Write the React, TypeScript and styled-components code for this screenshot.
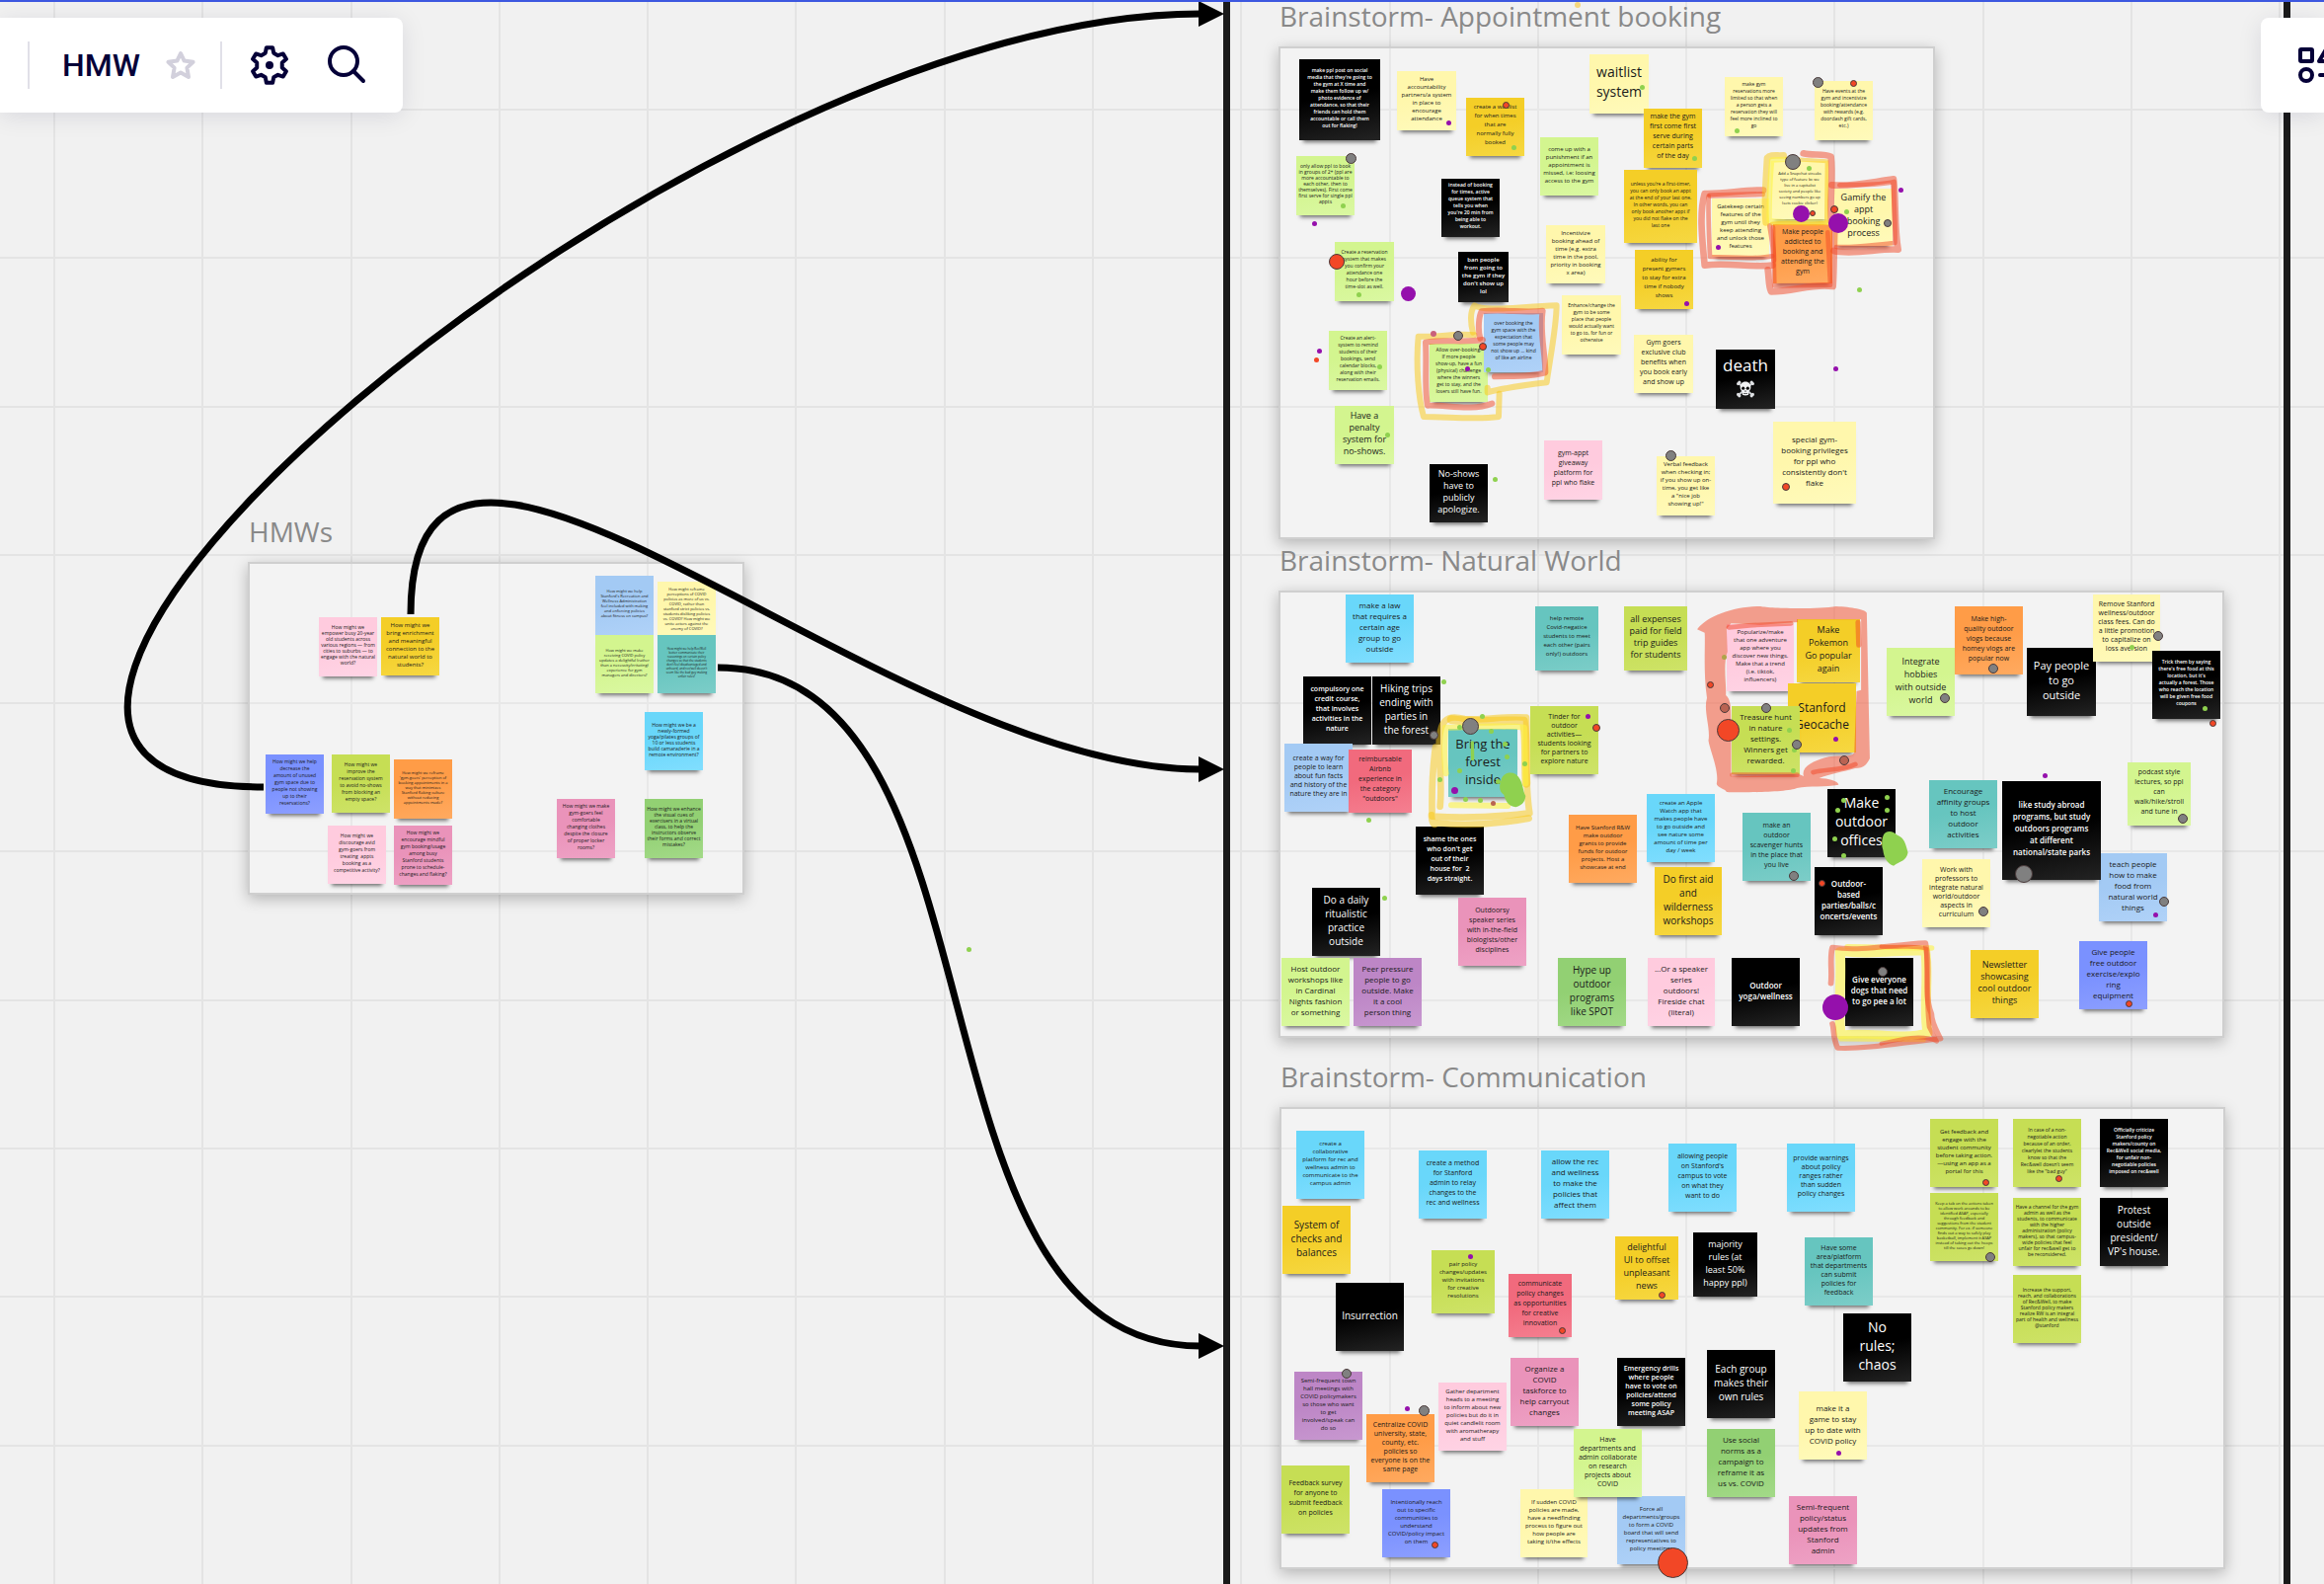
import React from "react";
import styled, { createGlobalStyle, css } from "styled-components";

const GlobalStyle = createGlobalStyle`
  * { box-sizing: border-box; }
  html, body { margin: 0; padding: 0; }
  body {
    background: #f1f1f1;
    color: #1a1a1a;
    font-family: "Open Sans", "Noto Sans", sans-serif;
  }
`;

/* ---------- palette ---------- */

const paper = {
  black: ["#000000", "#232323"],
  sand: ["#fff7ac", "#fffabb"],
  yellow: ["#f4ce27", "#f6d842"],
  lime: ["#d3f58f", "#daf8a2"],
  olive: ["#c6de54", "#cee368"],
  teal: ["#66c5bf", "#7ccdc8"],
  cyan: ["#69d7fa", "#81deff"],
  sky: ["#a3caf4", "#b0d2f8"],
  indigo: ["#7a91ff", "#8d9fff"],
  orange: ["#ff9c47", "#ffaa60"],
  pink: ["#ffcbde", "#ffd4e5"],
  rose: ["#ea93ba", "#eea2c5"],
  red: ["#f16a7d", "#f57f90"],
  purple: ["#bd86c6", "#c898d0"],
  green: ["#92d073", "#a3da88"],
} as const;

type Paper = keyof typeof paper;

const ink = {
  red: "#f24726",
  gray: "#808080",
  purple: "#9510ac",
  green: "#8fd14f",
  brown: "#b96352",
  olive: "#aea44a",
  mauve: "#c9607c",
  amber: "#f6d77c",
} as const;

type Ink = keyof typeof ink;

/* ---------- canvas parts ---------- */

const Canvas = styled.main`
  position: relative;
  min-height: 100vh;
  overflow: hidden;
  border-top: 2px solid #3d58e0;
`;

const Surface = styled.div`
  position: absolute;
  inset: -2px 0 0;
`;

const Drawing = styled.svg`
  position: absolute;
  inset: 0;
  width: 100%;
  height: 100%;
  pointer-events: none;
`;

const Board = styled.section<{ $x: number; $y: number; $w: number; $h: number }>`
  position: absolute;
  left: ${(p) => p.$x}px;
  top: ${(p) => p.$y}px;
  width: ${(p) => p.$w}px;
  height: ${(p) => p.$h}px;
  background: rgba(255, 255, 255, 0.15);
  box-shadow: 0 0 0 2px #cfcfcf, 0 4px 14px 2px rgba(0, 0, 0, 0.26);
`;

const BoardTitle = styled.h2`
  position: absolute;
  left: -1px;
  bottom: 100%;
  margin: 0 0 19px;
  color: #898989;
  font-size: 28px;
  font-weight: 400;
  line-height: 28px;
  white-space: nowrap;
`;

const Sticky = styled.article<{
  $x: number;
  $y: number;
  $w: number;
  $h: number;
  $paper: Paper;
}>`
  position: absolute;
  left: ${(p) => p.$x}px;
  top: ${(p) => p.$y}px;
  width: ${(p) => p.$w}px;
  height: ${(p) => p.$h}px;
  display: flex;
  flex-direction: column;
  align-items: center;
  justify-content: center;
  padding-bottom: 4px;
  color: ${(p) => (p.$paper === "black" ? "#ffffff" : "#1a1a1a")};
  background: linear-gradient(170deg, ${(p) => paper[p.$paper][0]} 45%, ${(p) => paper[p.$paper][1]});
  box-shadow: 0 6px 4px -4px rgba(0, 0, 0, 0.55);
`;

const StickyText = styled.p<{ $size: number; $line: number; $strong: boolean }>`
  margin: 0;
  font-size: ${(p) => p.$size}px;
  font-weight: ${(p) => (p.$strong ? 600 : 400)};
  line-height: ${(p) => p.$line}px;
  text-align: center;
  white-space: pre;
`;

const Dot = styled.span<{ $x: number; $y: number; $d: number; $ink: Ink }>`
  position: absolute;
  left: ${(p) => p.$x - Math.floor(p.$d / 2)}px;
  top: ${(p) => p.$y - Math.floor(p.$d / 2)}px;
  width: ${(p) => p.$d}px;
  height: ${(p) => p.$d}px;
  border-radius: 50%;
  background: ${(p) => ink[p.$ink]};
  ${(p) =>
    p.$d > 5 &&
    (p.$ink === "red" || p.$ink === "gray" || p.$ink === "brown") &&
    css`
      border: 1px solid #4a3a3a;
    `}
`;

const Wall = styled.div<{ $x: number }>`
  position: absolute;
  top: 0;
  bottom: 0;
  left: ${(p) => p.$x}px;
  width: 7px;
  background: #1a1a1a;
`;

/* ---------- toolbars ---------- */

const Bars = styled.header`
  position: absolute;
  inset: 16px 0 auto;
  display: flex;
  justify-content: space-between;
`;

const Bar = styled.nav<{ $side: "left" | "right" }>`
  display: flex;
  align-items: center;
  height: 96px;
  background: #ffffff;
  box-shadow: 0 4px 24px rgba(5, 0, 56, 0.1);
  ${(p) =>
    p.$side === "left"
      ? css`
          padding: 0 37px 0 28px;
          border-radius: 0 8px 8px 0;
        `
      : css`
          width: 64px;
          padding-left: 36px;
          border-radius: 8px 0 0 8px;
          overflow: hidden;
        `}
`;

const Divider = styled.span`
  width: 2px;
  height: 48px;
  background: #e1e0e8;
`;

const BoardName = styled.h1`
  margin: 0 25px 0 33px;
  color: #050038;
  font-family: Roboto, "Noto Sans", sans-serif;
  font-size: 32px;
  font-weight: 500;
  line-height: 48px;
`;

const IconButton = styled.button<{ $gap?: number }>`
  display: block;
  flex: none;
  margin: 0 0 0 ${(p) => p.$gap ?? 0}px;
  padding: 0;
  border: 0;
  background: none;
  color: #050038;
  line-height: 0;
  cursor: pointer;
`;

const StarButton = styled(IconButton)`
  margin-right: 24px;
  color: #d2d0dc;
`;

/* ---------- data ---------- */

type Note = [number, number, number, number, Paper, number, number, string];

interface BoardData {
  title: string;
  x: number;
  y: number;
  w: number;
  h: number;
  notes: Note[];
}

const boards: BoardData[] = [
  {
    title: "HMWs",
    x: 253,
    y: 571,
    w: 499,
    h: 333,
    notes: [
      [323, 625, 59, 60, "pink", 5, 6, "How might we\nempower busy 20-year\nold students across\nvarious regions — from\ncities to suburbs — to\nengage with the natural\nworld?"],
      [386, 625, 59, 59, "yellow", 6, 8, "How might we\nbring enrichment\nand meaningful\nconnection to the\nnatural world to\nstudents?"],
      [603, 583, 59, 60, "sky", 4, 5, "How might we help\nStanford's Recreation and\nWellness Administration\nfeel included with making\nand enforcing policies\nabout fitness on campus?"],
      [666, 589, 59, 58, "sand", 4, 5, "How might reframe\nperceptions of COVID\npolicies as more of us vs.\nCOVID, rather than\nstanford strict policies vs.\nstudents disliking policies\nvs. COVID? How might we\nunite actors against the\nenemy of COVID?"],
      [603, 643, 59, 59, "lime", 4, 5, "How might we make\nreceiving COVID policy\nupdates a delightful (rather\nthan a necessity/irritating)\nexperience for gym\nmanagers and directors?"],
      [666, 643, 59, 59, "teal", 3, 4, "How might we help Rec/Well\nbetter communicate their\nreasonings on certain policy\nchanges so that the students\ndon't feel disadvantaged and\nunheard, and rec/well doesn't\nseem like the bad guy making\nunfair rules?"],
      [653, 721, 59, 59, "cyan", 5, 6, "How might we be a\nnewly-formed\nyoga/pilates groups of\n10 or less students\nbuild camaraderie in a\nremote environment?"],
      [269, 764, 59, 60, "indigo", 5, 7, "How might we help\ndecrease the\namount of unused\ngym space due to\npeople not showing\nup to their\nreservations?"],
      [336, 764, 59, 59, "olive", 5, 7, "How might we\nimprove the\nreservation system\nto avoid no-shows\nfrom blocking an\nempty space?"],
      [399, 769, 59, 60, "orange", 4, 5, "How might we reframe\n'gym-goers' perception of\nbooking appointments in a\nway that minimizes\nStanford flaking culture\nwithout reducing\nappointments made?"],
      [332, 836, 59, 59, "pink", 5, 7, "How might we\ndiscourage avid\ngym-goers from\ntreating  appts\nbooking as a\ncompetitive activity?"],
      [399, 836, 59, 60, "rose", 5, 7, "How might we\nencourage mindful\ngym booking/usage\namong busy\nStanford students\nprone to schedule-\nchanges and flaking?"],
      [564, 809, 59, 60, "rose", 5, 7, "How might we make\ngym-goers feel\ncomfortable\nchanging clothes\ndespite the closure\nof proper locker\nrooms?"],
      [653, 809, 59, 60, "green", 5, 6, "How might we enhance\nthe visual cues of\nexercisers in a virtual\nclass, to help the\ninstructors observe\ntheir forms and correct\nmistakes?"],
    ],
  },
  {
    title: "Brainstorm- Appointment booking",
    x: 1297,
    y: 49,
    w: 661,
    h: 495,
    notes: [
      [1316, 60, 82, 82, "black", 5, 7, "make ppl post on social\nmedia that they're going to\nthe gym at X time and\nmake them follow up w/\nphoto evidence of\nattendance, so that their\nfriends can hold them\naccountable or call them\nout for flaking!"],
      [1415, 72, 60, 60, "sand", 6, 8, "Have\naccountability\npartners/a system\nin place to\nencourage\nattendance"],
      [1485, 99, 59, 59, "yellow", 6, 9, "create a waitlist\nfor when times\nthat are\nnormally fully\nbooked"],
      [1610, 55, 60, 60, "sand", 14, 20, "waitlist\nsystem"],
      [1313, 158, 59, 60, "lime", 5, 6, "only allow ppl to book\nin groups of 2+ (ppl are\nmore accountable to\neach other, then to\nthemselves). First come\nfirst serve for single ppl\nappts"],
      [1460, 181, 59, 59, "black", 5, 7, "instead of booking\nfor times, active\nqueue system that\ntells you when\nyou're 20 min from\nbeing able to\nworkout."],
      [1560, 139, 59, 59, "lime", 6, 8, "come up with a\npunishment if an\nappointment is\nmissed, i.e: loosing\naccess to the gym"],
      [1352, 245, 60, 60, "lime", 5, 7, "Create a reservation\nsystem that makes\nyou confirm your\nattendance one\nhour before the\ntime-slot as well."],
      [1477, 255, 51, 51, "black", 6, 8, "ban people\nfrom going to\nthe gym if they\ndon't show up\nlol"],
      [1566, 228, 60, 59, "sand", 6, 8, "Incentivize\nbooking ahead of\ntime (e.g. extra\ntime in the pool,\npriority in booking\nx area)"],
      [1665, 110, 59, 60, "yellow", 7, 10, "make the gym\nfirst come first\nserve during\ncertain parts\nof the day"],
      [1645, 172, 74, 74, "yellow", 5, 7, "unless you're a first-timer,\nyou can only book an appt\nat the end of your last one.\nIn other words, you can\nonly book another appt if\nyou did not flake on the\nlast one"],
      [1656, 253, 59, 60, "yellow", 6, 9, "ability for\npresent gymers\nto stay for extra\ntime if nobody\nshows"],
      [1747, 78, 59, 60, "sand", 5, 7, "make gym\nreservations more\nlimited so that when\na person gets a\nreservation they will\nfeel more inclined to\ngo"],
      [1838, 82, 59, 60, "sand", 5, 7, "Have events at the\ngym and incentivize\nbooking/attendance\nwith rewards (e.g.\ndoordash gift cards,\netc.)"],
      [1734, 201, 58, 59, "sand", 6, 8, "Gatekeep certain\nfeatures of the\ngym until they\nkeep attending\nand unlock those\nfeatures"],
      [1858, 191, 59, 58, "sand", 9, 12, "Gamify the\nappt\nbooking\nprocess"],
      [1794, 163, 58, 59, "sand", 4, 6, "Add a Snapchat streaks\ntype of feature bc we\nlive in a capitalist\nsociety and people like\nseeing numbers go up\n(sets cookie clicker)"],
      [1796, 227, 60, 60, "orange", 7, 10, "Make people\naddicted to\nbooking and\nattending the\ngym"],
      [1346, 335, 59, 60, "lime", 5, 7, "Create an alert-\nsystem to remind\nstudents of their\nbookings, send\ncalendar blocks,\nalong with their\nreservation emails."],
      [1448, 348, 59, 59, "lime", 5, 7, "Allow over-booking.\nIf more people\nshow-up, have a fun\n(physical) challenge\nwhere the winners\nget to stay, and the\nlosers still have fun."],
      [1503, 317, 60, 60, "sky", 5, 7, "over booking the\ngym space with the\nexpectation that\nsome people may\nnot show up ... kind\nof like an airline"],
      [1582, 299, 60, 60, "sand", 5, 7, "Enhance/change the\ngym to be some\nplace that people\nwould actually want\nto go to, for fun or\notherwise"],
      [1352, 411, 60, 59, "lime", 9, 12, "Have a\npenalty\nsystem for\nno-shows."],
      [1448, 470, 59, 59, "black", 9, 12, "No-shows\nhave to\npublicly\napologize."],
      [1564, 446, 59, 60, "pink", 7, 10, "gym-appt\ngiveaway\nplatform for\nppl who flake"],
      [1655, 339, 60, 59, "sand", 7, 10, "Gym goers\nexclusive club\nbenefits when\nyou book early\nand show up"],
      [1738, 354, 60, 60, "black", 17, 24, "death"],
      [1678, 462, 59, 60, "sand", 6, 8, "Verbal feedback\nwhen checking in;\nif you show up on-\ntime, you get like\na \"nice job\nshowing up!\""],
      [1796, 427, 84, 83, "sand", 8, 11, "special gym-\nbooking privileges\nfor ppl who\nconsistently don't\nflake"],
    ],
  },
  {
    title: "Brainstorm- Natural World",
    x: 1297,
    y: 600,
    w: 954,
    h: 449,
    notes: [
      [1363, 602, 69, 69, "cyan", 8, 11, "make a law\nthat requires a\ncertain age\ngroup to go\noutside"],
      [1555, 614, 64, 65, "teal", 6, 9, "help remote\nCovid-negatice\nstudents to meet\neach other (pairs\nonly!) outdoors"],
      [1645, 614, 64, 65, "olive", 9, 12, "all expenses\npaid for field\ntrip guides\nfor students"],
      [1320, 685, 69, 69, "black", 7, 10, "compulsory one\ncredit course,\nthat involves\nactivities in the\nnature"],
      [1390, 685, 69, 69, "black", 10, 14, "Hiking trips\nending with\nparties in\nthe forest"],
      [1301, 753, 69, 69, "sky", 7, 9, "create a way for\npeople to learn\nabout fun facts\nand history of the\nnature they are in"],
      [1366, 759, 64, 64, "red", 7, 10, "reimbursable\nAirbnb\nexperience in\nthe category\n\"outdoors\""],
      [1467, 738, 70, 69, "teal", 13, 18, "Bring the\nforest\ninside"],
      [1550, 715, 69, 69, "olive", 7, 9, "Tinder for\noutdoor\nactivities—\nstudents looking\nfor partners to\nexplore nature"],
      [1434, 837, 69, 69, "black", 7, 10, "shame the ones\nwho don't get\nout of their\nhouse for  2\ndays straight."],
      [1329, 899, 69, 69, "black", 10, 14, "Do a daily\nritualistic\npractice\noutside"],
      [1298, 970, 69, 69, "lime", 8, 11, "Host outdoor\nworkshops like\nin Cardinal\nNights fashion\nor something"],
      [1371, 970, 69, 69, "purple", 8, 11, "Peer pressure\npeople to go\noutside. Make\nit a cool\nperson thing"],
      [1477, 909, 69, 69, "rose", 7, 10, "Outdoorsy\nspeaker series\nwith in-the-field\nbiologists/other\ndisciplines"],
      [1589, 825, 69, 69, "orange", 6, 8, "Have Stanford R&W\nmake outdoor\ngrants to provide\nfunds for outdoor\nprojects. Host a\nshowcase at end"],
      [1668, 804, 69, 69, "cyan", 6, 8, "create an Apple\nWatch app that\nmakes people have\nto go outside and\nsee nature some\namount of time per\nday / week"],
      [1676, 878, 68, 69, "yellow", 10, 14, "Do first aid\nand\nwilderness\nworkshops"],
      [1578, 970, 69, 69, "green", 10, 14, "Hype up\noutdoor\nprograms\nlike SPOT"],
      [1669, 970, 68, 69, "pink", 8, 11, "...Or a speaker\nseries\noutdoors!\nFireside chat\n(literal)"],
      [1754, 970, 69, 69, "black", 8, 11, "Outdoor\nyoga/wellness"],
      [1869, 970, 69, 69, "black", 8, 11, "Give everyone\ndogs that need\nto go pee a lot"],
      [1996, 962, 69, 69, "yellow", 9, 12, "Newsletter\nshowcasing\ncool outdoor\nthings"],
      [2106, 953, 69, 69, "indigo", 8, 11, "Give people\nfree outdoor\nexercise/explo\nring\nequipment"],
      [1838, 878, 69, 69, "black", 8, 11, "Outdoor-\nbased\nparties/balls/c\noncerts/events"],
      [1947, 870, 69, 69, "sand", 7, 9, "Work with\nprofessors to\nintegrate natural\nworld/outdoor\naspects in\ncurriculum"],
      [2126, 864, 69, 69, "sky", 8, 11, "teach people\nhow to make\nfood from\nnatural world\nthings"],
      [2028, 791, 100, 100, "black", 8, 12, "like study abroad\nprograms, but study\noutdoors programs\nat different\nnational/state parks"],
      [1954, 790, 69, 69, "teal", 8, 11, "Encourage\naffinity groups\nto host\noutdoor\nactivities"],
      [1851, 799, 69, 69, "black", 14, 19, "Make\noutdoor\noffices"],
      [1765, 823, 69, 69, "teal", 7, 10, "make an\noutdoor\nscavenger hunts\nin the place that\nyou live"],
      [2155, 772, 64, 64, "lime", 7, 10, "podcast style\nlectures, so ppl\ncan\nwalk/hike/stroll\nand tune in"],
      [2053, 656, 70, 69, "black", 11, 15, "Pay people\nto go\noutside"],
      [2120, 602, 68, 68, "sand", 7, 9, "Remove Stanford\nwellness/outdoor\nclass fees. Can do\na little promotion\nto capitalize on\nloss aversion"],
      [2180, 659, 69, 69, "black", 5, 7, "Trick them by saying\nthere's free food at this\nlocation, but it's\nactually a forest. Those\nwho reach the location\nwill be given free food\ncoupons"],
      [1911, 656, 69, 69, "lime", 9, 13, "Integrate\nhobbies\nwith outside\nworld"],
      [1980, 614, 69, 69, "orange", 7, 10, "Make high-\nquality outdoor\nvlogs because\nhomey vlogs are\npopular now"],
      [1749, 632, 68, 68, "pink", 6, 8, "Popularize/make\nthat one adventure\napp where you\ndiscover new things.\nMake that a trend\n(i.e. tiktok,\ninfluencers)"],
      [1820, 627, 64, 64, "yellow", 9, 13, "Make\nPokemon\nGo popular\nagain"],
      [1811, 692, 69, 70, "yellow", 12, 17, "Stanford\nGeocache"],
      [1754, 715, 69, 69, "olive", 8, 11, "Treasure hunt\nin nature\nsettings.\nWinners get\nrewarded."],
    ],
  },
  {
    title: "Brainstorm- Communication",
    x: 1298,
    y: 1123,
    w: 954,
    h: 464,
    notes: [
      [1313, 1145, 69, 69, "cyan", 6, 8, "create a\ncollaborative\nplatform for rec and\nwellness admin to\ncommunicate to the\ncampus admin"],
      [1437, 1165, 69, 69, "cyan", 7, 10, "create a method\nfor Stanford\nadmin to relay\nchanges to the\nrec and wellness"],
      [1561, 1165, 69, 69, "cyan", 8, 11, "allow the rec\nand wellness\nto make the\npolicies that\naffect them"],
      [1690, 1158, 69, 69, "cyan", 7, 10, "allowing people\non Stanford's\ncampus to vote\non what they\nwant to do"],
      [1810, 1158, 69, 69, "cyan", 7, 9, "provide warnings\nabout policy\nranges rather\nthan sudden\npolicy changes"],
      [1299, 1221, 69, 69, "yellow", 10, 14, "System of\nchecks and\nbalances"],
      [1450, 1266, 64, 64, "olive", 6, 8, "pair policy\nchanges/updates\nwith invitations\nfor creative\nresolutions"],
      [1528, 1290, 64, 64, "red", 7, 10, "communicate\npolicy changes\nas opportunities\nfor creative\ninnovation"],
      [1636, 1252, 64, 64, "yellow", 9, 13, "delightful\nUI to offset\nunpleasant\nnews"],
      [1715, 1248, 65, 65, "black", 9, 13, "majority\nrules (at\nleast 50%\nhappy ppl)"],
      [1353, 1299, 69, 69, "black", 10, 14, "Insurrection"],
      [1311, 1389, 69, 69, "purple", 6, 8, "Semi-frequent town\nhall meetings with\nCOVID policymakers\nso those who want\nto get\ninvolved/speak can\ndo so"],
      [1384, 1432, 69, 69, "orange", 7, 9, "Centralize COVID\nuniversity, state,\ncounty, etc.\npolicies so\neveryone is on the\nsame page"],
      [1457, 1400, 69, 69, "pink", 6, 8, "Gather department\nheads to a meeting\nto inform about new\npolicies but do it in\nquiet candlelit room\nwith aromatherapy\nand stuff"],
      [1530, 1375, 69, 69, "rose", 8, 11, "Organize a\nCOVID\ntaskforce to\nhelp carryout\nchanges"],
      [1638, 1375, 69, 69, "black", 7, 9, "Emergency drills\nwhere people\nhave to vote on\npolicies/attend\nsome policy\nmeeting ASAP"],
      [1729, 1367, 69, 69, "black", 10, 14, "Each group\nmakes their\nown rules"],
      [1298, 1484, 69, 69, "olive", 7, 10, "Feedback survey\nfor anyone to\nsubmit feedback\non policies"],
      [1400, 1508, 69, 69, "indigo", 6, 8, "Intentionally reach\nout to specific\ncommunities to\nunderstand\nCOVID/policy impact\non them"],
      [1540, 1508, 68, 69, "sand", 6, 8, "If sudden COVID\npolicies are made,\nhave a needfinding\nprocess to figure out\nhow people are\ntaking it/the effects"],
      [1638, 1515, 69, 69, "sky", 6, 8, "Force all\ndepartments/groups\nto form a COVID\nboard that will send\nrepresentatives to\npolicy meetings"],
      [1594, 1447, 69, 69, "lime", 7, 9, "Have\ndepartments and\nadmin collaborate\non research\nprojects about\nCOVID"],
      [1729, 1447, 69, 69, "green", 8, 11, "Use social\nnorms as a\ncampaign to\nreframe it as\nus vs. COVID"],
      [1828, 1253, 69, 69, "teal", 7, 9, "Have some\narea/platform\nthat departments\ncan submit\npolicies for\nfeedback"],
      [1867, 1330, 69, 69, "black", 14, 19, "No\nrules;\nchaos"],
      [1822, 1409, 69, 69, "sand", 8, 11, "make it a\ngame to stay\nup to date with\nCOVID policy"],
      [1812, 1515, 69, 69, "rose", 8, 11, "Semi-frequent\npolicy/status\nupdates from\nStanford\nadmin"],
      [1955, 1133, 69, 69, "olive", 6, 8, "Get feedback and\nengage with the\nstudent community\nbefore taking action.\n—using an app as a\nportal for this"],
      [2039, 1133, 69, 69, "olive", 5, 7, "In case of a non-\nnegotiable action\nbecause of an order,\nclearlylet the students\nknow so that the\nRec&well doesn't seem\nlike the \"bad guy\""],
      [2127, 1133, 69, 69, "black", 5, 7, "Officially criticize\nStanford policy\nmakers/county on\nRec&Well social media,\nfor unfair non-\nnegotiable policies\nimposed on rec&well"],
      [1955, 1208, 69, 69, "olive", 4, 5, "Keep a tab on the actions taken\nto allow work arounds to be\nidentified ASAP, especially\nthrough feedback and\nsuggestions from the student\ncommunity. For ex. if someone\nfinds out a way to safely play\nbasketball, implement it ASAP\ninstead of taking out the hoops\ntill the cases go down!"],
      [2039, 1213, 69, 69, "olive", 5, 6, "Have a channel for the gym\nadmin as well as the\nstudents, to communicate\nwith the higher\nadministration (policy\nmakers), so that campus-\nwide policies that feel\nunfair for rec&well get to\nbe reconsidered."],
      [2127, 1213, 69, 69, "black", 10, 14, "Protest\noutside\npresident/\nVP's house."],
      [2039, 1291, 69, 69, "olive", 5, 6, "Increase the support,\nreach, and collaborations\nof Rec&Well, to make\nStanford policy makers\nrealize RW is an integral\npart of health and wellness\n@stanford"],
    ],
  },
];

type DotData = [number, number, number, Ink];

const dots: DotData[] = [
  [1598, 5, 6, "amber"],
  [1525, 106, 7, "red"], [1533, 149, 5, "green"], [1467, 124, 5, "purple"],
  [1368, 160, 11, "gray"], [1360, 208, 5, "green"], [1331, 226, 5, "purple"],
  [1354, 265, 16, "red"], [1376, 298, 5, "green"], [1426, 297, 15, "purple"],
  [1336, 355, 5, "purple"], [1333, 364, 5, "red"], [1397, 371, 5, "green"],
  [1452, 338, 6, "mauve"], [1477, 340, 10, "gray"], [1502, 351, 8, "red"],
  [1486, 373, 5, "purple"], [1507, 374, 5, "green"], [1405, 440, 5, "green"],
  [1514, 485, 5, "green"], [1663, 88, 5, "green"], [1716, 160, 5, "green"],
  [1759, 132, 5, "green"], [1841, 83, 11, "gray"], [1877, 84, 7, "red"],
  [1816, 164, 16, "gray"], [1832, 170, 5, "green"], [1824, 216, 17, "purple"],
  [1836, 216, 6, "red"], [1858, 212, 8, "red"], [1870, 214, 5, "green"],
  [1862, 226, 20, "purple"], [1912, 226, 8, "gray"], [1925, 192, 5, "purple"],
  [1740, 250, 5, "purple"], [1883, 293, 5, "green"], [1708, 307, 5, "purple"],
  [1859, 373, 5, "purple"], [1692, 461, 11, "gray"], [1809, 493, 8, "red"],
  [1462, 690, 5, "green"], [1452, 744, 9, "gray"], [1489, 735, 17, "gray"],
  [1501, 725, 5, "green"], [1478, 736, 5, "green"], [1510, 740, 5, "green"],
  [1524, 753, 5, "green"], [1526, 766, 5, "green"], [1544, 773, 5, "green"],
  [1517, 791, 5, "green"], [1478, 780, 5, "green"], [1458, 789, 5, "green"],
  [1484, 809, 5, "green"], [1499, 810, 5, "green"], [1473, 800, 7, "purple"],
  [1512, 813, 5, "brown"], [1608, 725, 5, "purple"], [1617, 737, 8, "red"],
  [1386, 830, 5, "green"], [1402, 909, 5, "green"], [1746, 665, 5, "olive"],
  [1732, 693, 7, "red"], [1747, 717, 10, "brown"], [1750, 739, 23, "red"],
  [1789, 717, 10, "gray"], [1812, 739, 5, "green"], [1817, 759, 5, "green"],
  [1820, 754, 10, "gray"], [1859, 748, 5, "purple"], [1868, 770, 10, "brown"],
  [1816, 780, 5, "green"], [1970, 707, 10, "gray"], [2019, 677, 10, "gray"],
  [2186, 644, 10, "gray"], [2159, 655, 5, "green"], [2233, 717, 5, "green"],
  [2241, 732, 7, "red"], [1867, 810, 5, "green"], [1911, 807, 5, "green"],
  [1861, 820, 5, "green"], [1911, 820, 5, "green"], [1858, 849, 5, "green"],
  [1867, 866, 5, "green"], [1817, 887, 10, "gray"], [1845, 894, 7, "red"],
  [2071, 785, 5, "purple"], [2050, 885, 18, "gray"], [2009, 923, 10, "gray"],
  [2211, 829, 10, "gray"], [2192, 913, 10, "gray"], [2183, 926, 5, "purple"],
  [1907, 984, 10, "gray"], [2156, 1016, 7, "red"], [1859, 1020, 26, "purple"],
  [1489, 1272, 5, "purple"], [1683, 1311, 7, "red"], [1582, 1347, 7, "red"],
  [1364, 1391, 10, "gray"], [1425, 1426, 5, "purple"], [1442, 1428, 11, "gray"],
  [1453, 1564, 7, "red"], [1694, 1582, 31, "red"], [2011, 1197, 7, "red"],
  [2085, 1193, 7, "red"], [2016, 1273, 10, "gray"], [1862, 1471, 5, "purple"],
  [981, 961, 5, "green"],
];

const gridStep = 150.28;
const gridColumns = Array.from({ length: 28 }, (_, i) => Math.round(55 + i * gridStep));
const gridRows = Array.from({ length: 16 }, (_, i) => Math.round(111 + i * gridStep));

/* ---------- drawings ---------- */

const Grid = () => (
  <Drawing aria-hidden="true" stroke="#e4e4e4" strokeWidth="2">
    {gridColumns.map((x) => (
      <line key={`c${x}`} x1={x} x2={x} y1="0" y2="100%" />
    ))}
    {gridRows.map((y) => (
      <line key={`r${y}`} x1="0" x2="100%" y1={y} y2={y} />
    ))}
  </Drawing>
);

const Markers = () => {
  const red = "rgba(242,71,38,0.5)";
  const amber = "rgba(250,199,16,0.5)";
  const lemon = "rgba(254,244,69,0.6)";
  return (
    <Drawing aria-hidden="true" fill="none" strokeLinecap="round" strokeLinejoin="round">
      <g transform="translate(1290 270) scale(0.3333)" strokeWidth="18">
        <path stroke={amber} d="M606 200C596 160 598 136 610 118C640 138 740 122 860 118C860 180 840 280 830 352C780 358 700 368 650 382L650 368" />
        <path stroke={amber} d="M610 208C560 200 500 216 440 212C432 300 440 400 456 456C530 456 620 466 684 456L686 386" />
        <path stroke={red} d="M628 218C620 190 624 150 632 136C700 128 760 142 818 134C808 200 826 260 826 322C780 336 720 332 672 334" />
        <path stroke={red} d="M636 222C580 232 520 220 462 230C466 300 458 370 468 422C530 420 600 440 664 416" />
      </g>
      <g transform="translate(1630 30) scale(0.3333)" strokeWidth="20">
        <path stroke={red} d="M468 488C410 486 350 500 290 498C272 560 284 650 290 716C360 706 430 724 496 716" />
        <path stroke={red} d="M302 506C300 570 304 640 306 690C370 690 440 700 496 688" strokeWidth="14" />
        <path stroke={red} d="M488 596C492 620 500 660 500 700M306 504L466 500" strokeWidth="16" />
        <path stroke={amber} d="M530 382C510 384 490 378 480 390C476 460 470 530 476 586" />
        <path stroke={lemon} d="M536 394L494 396C488 460 486 530 486 580C540 590 620 580 664 586" strokeWidth="16" />
        <path stroke={amber} d="M494 590C560 582 620 596 660 586L662 400L540 392" strokeWidth="12" />
        <path stroke={red} d="M590 376C620 384 650 374 674 386C682 450 668 520 676 590" />
        <path stroke={red} d="M676 472C740 478 800 462 864 454C872 520 866 600 878 668C820 664 740 686 682 672" />
        <path stroke={red} d="M700 472C760 470 820 474 866 462C862 520 872 600 868 648C800 654 740 664 690 660" strokeWidth="14" />
        <path stroke={red} d="M482 730C486 760 484 780 492 796C560 796 620 770 680 780C684 720 682 660 686 590" />
        <path stroke={red} d="M498 600L502 778L672 776L664 616" strokeWidth="14" />
      </g>
      <g transform="translate(1290 550) scale(0.3333)" strokeWidth="20">
        <path stroke={amber} d="M506 800C516 700 492 620 510 560C520 530 540 524 580 534C640 540 700 524 768 530C772 620 762 720 778 820C680 832 580 836 482 830C480 760 484 680 492 620" />
        <path stroke={amber} d="M540 536C620 548 700 536 760 540C770 600 764 660 768 730" strokeWidth="26" />
        <path stroke={lemon} d="M524 700C516 650 520 600 522 560C600 560 700 552 762 560L766 730M540 796L712 798" strokeWidth="18" />
        <path stroke={amber} d="M480 826C480 850 490 862 494 850C600 862 700 850 776 836" />
        <path stroke={ink.green} d="M604 606L605 656" strokeWidth="10" />
        <path
          fill={ink.green}
          d="M690 726C694 700 716 692 736 702C760 720 756 752 766 768C764 790 750 798 736 802C712 800 704 780 700 764C688 758 684 742 690 726Z"
        />
      </g>
      <g transform="translate(1680 580) scale(0.3827 0.3333)">
        <path
          fill={red}
          d="M102 172C130 130 200 102 270 102C290 108 420 112 470 102C510 104 548 112 551 122L559 564C552 580 545 594 520 594C490 604 450 612 425 624C450 624 478 634 476 644C440 652 400 646 366 654C340 668 200 668 180 666C176 656 150 652 154 638C160 600 136 540 132 510C138 470 118 420 128 380C118 300 124 220 122 182ZM192 154L180 170L182 240C170 280 180 340 178 372C196 390 190 430 192 470L192 620L372 612L384 618C376 590 410 572 440 562C470 552 500 560 514 552L518 546L524 360L536 356V142H368V150L270 158Z"
          fillRule="evenodd"
        />
        <path stroke={red} strokeWidth="14" d="M186 166L240 160L350 154M196 614L366 614M528 150L530 220M410 606C440 596 490 600 520 582" />
        <path stroke={lemon} strokeWidth="26" d="M480 1150C560 1164 640 1146 706 1150C716 1230 700 1320 712 1398C640 1420 560 1392 482 1404C474 1320 486 1230 480 1150Z" />
        <path stroke={lemon} strokeWidth="16" d="M500 1136L722 1140M484 1416L700 1418" />
        <path stroke={red} strokeWidth="15" d="M456 1248C460 1210 452 1170 460 1138C540 1152 620 1128 706 1124C722 1200 700 1280 722 1340C722 1370 740 1400 746 1416C660 1424 560 1448 474 1444C460 1410 466 1390 460 1370" />
        <path stroke={red} strokeWidth="12" d="M590 1136C640 1140 680 1130 708 1142C712 1220 708 1300 716 1380L736 1424C700 1400 640 1416 590 1430" />
        <path
          fill={ink.green}
          d="M594 800C600 780 622 784 630 796C652 806 654 826 660 850C656 876 640 876 622 890C604 884 596 862 594 842C590 830 590 814 594 800Z"
        />
      </g>
    </Drawing>
  );
};

const Connectors = () => (
  <Drawing aria-hidden="true" fill="none" stroke="#000000" strokeWidth="7">
    <path d="M267 797C-216 797 685 14 1216 14" />
    <path d="M416 622C416 296 893 779 1216 779" />
    <path d="M727 676C1033 676 905 1363 1216 1363" />
    {[14, 779, 1363].map((y) => (
      <path key={y} fill="#000000" stroke="none" d={`M1214 ${y - 13}L1240 ${y}L1214 ${y + 13}Z`} />
    ))}
  </Drawing>
);

const SkullIcon = () => (
  <svg width="20" height="24" viewBox="0 0 20 24" aria-hidden="true">
    <g stroke="#c9ccd0" strokeWidth="2" strokeLinecap="round">
      <path d="M3 6L17 18M17 6L3 18" />
    </g>
    <g fill="#dfe1e4">
      <circle cx="2.6" cy="6.6" r="1.6" />
      <circle cx="3.8" cy="5.2" r="1.6" />
      <circle cx="17.4" cy="6.6" r="1.6" />
      <circle cx="16.2" cy="5.2" r="1.6" />
      <circle cx="2.6" cy="17.4" r="1.6" />
      <circle cx="3.8" cy="18.8" r="1.6" />
      <circle cx="17.4" cy="17.4" r="1.6" />
      <circle cx="16.2" cy="18.8" r="1.6" />
    </g>
    <path fill="#f1f2f4" d="M10 4.4C6.6 4.4 4.6 6.8 4.6 10C4.6 12.4 5.6 13.6 6.8 14.4V17C6.8 18 7.6 18.4 10 18.4C12.4 18.4 13.2 18 13.2 17V14.4C14.4 13.6 15.4 12.4 15.4 10C15.4 6.8 13.4 4.4 10 4.4Z" />
    <g fill="#0b0b0b">
      <circle cx="7.7" cy="11.2" r="1.6" />
      <circle cx="12.3" cy="11.2" r="1.6" />
      <path d="M10 13L9.2 14.4H10.8Z" />
      <path d="M8 16H12V16.6H8Z" />
    </g>
  </svg>
);

const StarIcon = () => (
  <svg width="32" height="32" viewBox="0 0 32 32" fill="none" stroke="currentColor" strokeWidth="4" strokeLinejoin="round">
    <path d="M16 4L19.6 11.6L28.6 12.8L22.4 18.6L24 28L16 23.6L8 28L9.6 18.6L3.4 12.8L12.4 11.6Z" />
  </svg>
);

const gearPath = (() => {
  const at = (deg: number, r: number) => {
    const a = (deg * Math.PI) / 180;
    return `${(20 + r * Math.cos(a)).toFixed(2)} ${(20 + r * Math.sin(a)).toFixed(2)}`;
  };
  const steps: string[] = [];
  for (let i = 0; i < 6; i += 1) {
    const a = i * 60 - 90;
    steps.push(at(a - 10, 18), at(a + 10, 18), at(a + 19, 13), at(a + 41, 13));
  }
  return `M${steps.join("L")}Z`;
})();

const GearIcon = () => (
  <svg width="40" height="40" viewBox="0 0 40 40" fill="none" stroke="currentColor" strokeWidth="4" strokeLinejoin="round">
    <path d={gearPath} />
    <circle cx="20" cy="20" r="4" fill="currentColor" stroke="none" />
  </svg>
);

const SearchIcon = () => (
  <svg width="40" height="40" viewBox="0 0 40 40" fill="none" stroke="currentColor" strokeWidth="4" strokeLinecap="round">
    <circle cx="17" cy="16" r="14" />
    <path d="M27 26L37 36" />
  </svg>
);

const ShapesIcon = () => (
  <svg width="40" height="36" viewBox="0 0 40 36" fill="none" stroke="currentColor" strokeWidth="4" strokeLinecap="round" strokeLinejoin="round">
    <rect x="4" y="2" width="12" height="12" rx="1" />
    <path d="M30 2L37 14H23Z" />
    <circle cx="10" cy="28" r="6" />
    <path d="M24 28H36M30 22V34" />
  </svg>
);

export default function App() {
  return (
    <>
      <GlobalStyle />
      <Canvas>
        <Surface>
          <Grid />
          <Wall $x={1239} />
          <Wall $x={2313} />
          {boards.map((b) => (
            <Board key={b.title} $x={b.x} $y={b.y} $w={b.w} $h={b.h}>
              <BoardTitle>{b.title}</BoardTitle>
              {b.notes.map(([x, y, w, h, color, size, line, text]) => (
                <Sticky key={text} $x={x - b.x} $y={y - b.y} $w={w} $h={h} $paper={color}>
                  <StickyText $size={size} $line={line} $strong={color === "black" && size <= 8}>
                    {text}
                  </StickyText>
                  {text === "death" && <SkullIcon />}
                </Sticky>
              ))}
            </Board>
          ))}
          <Connectors />
          <Markers />
          {dots.map(([x, y, d, color]) => (
            <Dot key={`${x}-${y}`} $x={x} $y={y} $d={d} $ink={color} />
          ))}
        </Surface>
        <Bars>
          <Bar $side="left" aria-label="Board">
            <Divider />
            <BoardName>HMW</BoardName>
            <StarButton type="button" aria-label="Star this board">
              <StarIcon />
            </StarButton>
            <Divider />
            <IconButton type="button" aria-label="Settings" $gap={28}>
              <GearIcon />
            </IconButton>
            <IconButton type="button" aria-label="Search" $gap={38}>
              <SearchIcon />
            </IconButton>
          </Bar>
          <Bar $side="right" aria-label="Shapes">
            <IconButton type="button" aria-label="Shapes">
              <ShapesIcon />
            </IconButton>
          </Bar>
        </Bars>
      </Canvas>
    </>
  );
}
